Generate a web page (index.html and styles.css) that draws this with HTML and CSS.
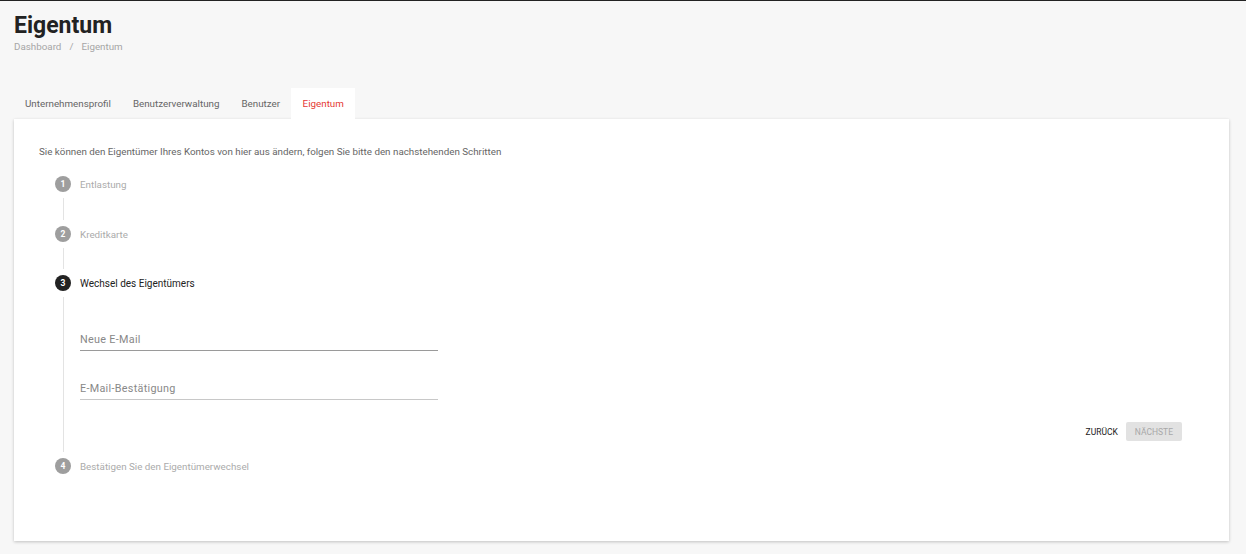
FILE: index.html
```html
<!DOCTYPE html>
<html lang="de">
<head>
<meta charset="utf-8">
<title>Eigentum</title>
<link rel="stylesheet" href="styles.css">
</head>
<body>
<div class="page">
  <header class="page-header">
    <h1 class="title">Eigentum</h1>
    <nav class="breadcrumb"><span>Dashboard</span><span class="sep">/</span><span>Eigentum</span></nav>
  </header>
  <div class="tabs">
    <div class="tab">Unternehmensprofil</div>
    <div class="tab">Benutzerverwaltung</div>
    <div class="tab">Benutzer</div>
    <div class="tab active">Eigentum</div>
  </div>
  <section class="card">
    <p class="intro">Sie können den Eigentümer Ihres Kontos von hier aus ändern, folgen Sie bitte den nachstehenden Schritten</p>
    <div class="stepper">
      <div class="step">
        <div class="step-head"><span class="num">1</span><span class="label">Entlastung</span></div>
        <div class="step-body"></div>
      </div>
      <div class="step">
        <div class="step-head"><span class="num">2</span><span class="label">Kreditkarte</span></div>
        <div class="step-body"></div>
      </div>
      <div class="step current">
        <div class="step-head"><span class="num">3</span><span class="label">Wechsel des Eigentümers</span></div>
        <div class="step-body open">
          <div class="field first"><span class="field-label">Neue E-Mail</span></div>
          <div class="field second"><span class="field-label">E-Mail-Bestätigung</span></div>
          <div class="actions">
            <button class="btn btn-text">ZURÜCK</button>
            <button class="btn btn-disabled">NÄCHSTE</button>
          </div>
        </div>
      </div>
      <div class="step last">
        <div class="step-head"><span class="num">4</span><span class="label">Bestätigen Sie den Eigentümerwechsel</span></div>
      </div>
    </div>
  </section>
</div>
</body>
</html>
```
FILE: styles.css
```css
* { box-sizing: border-box; }
html, body { margin: 0; padding: 0; }
body {
  background: #f7f7f7;
  font-family: Roboto, "Liberation Sans", Arial, sans-serif;
  color: #333;
  border-top: 1px solid #222;
  height: 554px;
  overflow: hidden;
}
.page { padding: 0 17px 0 14px; }
.page-header { padding-top: 11px; }
.title {
  margin: 0;
  font-size: 23px;
  line-height: 28px;
  font-weight: 700;
  color: #222;
}
.breadcrumb {
  margin-top: 0;
  font-size: 9.8px;
  line-height: 14px;
  color: #a6a6a6;
}
.breadcrumb .sep { margin: 0 8px; }
.tabs {
  display: flex;
  margin-top: 34px;
  height: 31px;
}
.tab {
  padding: 0 11px;
  font-size: 9.8px;
  line-height: 31px;
  color: #666;
}
.tab.active {
  background: #fff;
  color: #e53935;
  padding: 0 11.5px;
}
.card {
  background: #fff;
  box-shadow: 0 1px 3px rgba(0,0,0,0.22);
  padding: 26px 25px 66px 25px;
  height: 422px;
}
.intro {
  margin: 0;
  font-size: 9.8px;
  line-height: 14px;
  color: #666;
}
.stepper { margin-top: 17px; padding-left: 16px; }
.step-head {
  display: flex;
  align-items: center;
  height: 16px;
}
.num {
  width: 16px;
  height: 16px;
  border-radius: 50%;
  background: #9e9e9e;
  color: #fff;
  font-size: 8.5px;
  font-weight: 700;
  display: flex;
  align-items: center;
  justify-content: center;
  flex: none;
}
.label {
  margin-left: 9px;
  font-size: 9.8px;
  color: #ababab;
}
.current .num { background: #222; }
.current .label { color: #222; font-size: 10px; }
.step-body {
  margin: 6px 0 6px 7.5px;
  height: 22px;
  border-left: 1px solid #e3e3e3;
}
.step-body.open {
  height: auto;
  padding: 35px 22px 11px 16.5px;
}
.step + .step .step-body:not(.open) { height: 21px; }
.field {
  width: 358px;
  padding-bottom: 2px;
  border-bottom: 1px solid #9a9a9a;
}
.field.second { margin-top: 30px; border-bottom-color: #c8c8c8; }
.field-label {
  display: block;
  font-size: 10.8px;
  line-height: 16px;
  color: #888;
  letter-spacing: 0.3px;
}
.actions {
  display: flex;
  justify-content: flex-end;
  align-items: center;
  margin-top: 22px;
  gap: 8px;
}
.btn {
  font-family: inherit;
  font-size: 8.5px;
  border: none;
  height: 19px;
  border-radius: 2px;
  padding: 0 9px;
  background: transparent;
}
.btn-text { color: #222; padding: 0; }
.btn-disabled { background: #e2e2e2; color: #a8a8a8; }
```
